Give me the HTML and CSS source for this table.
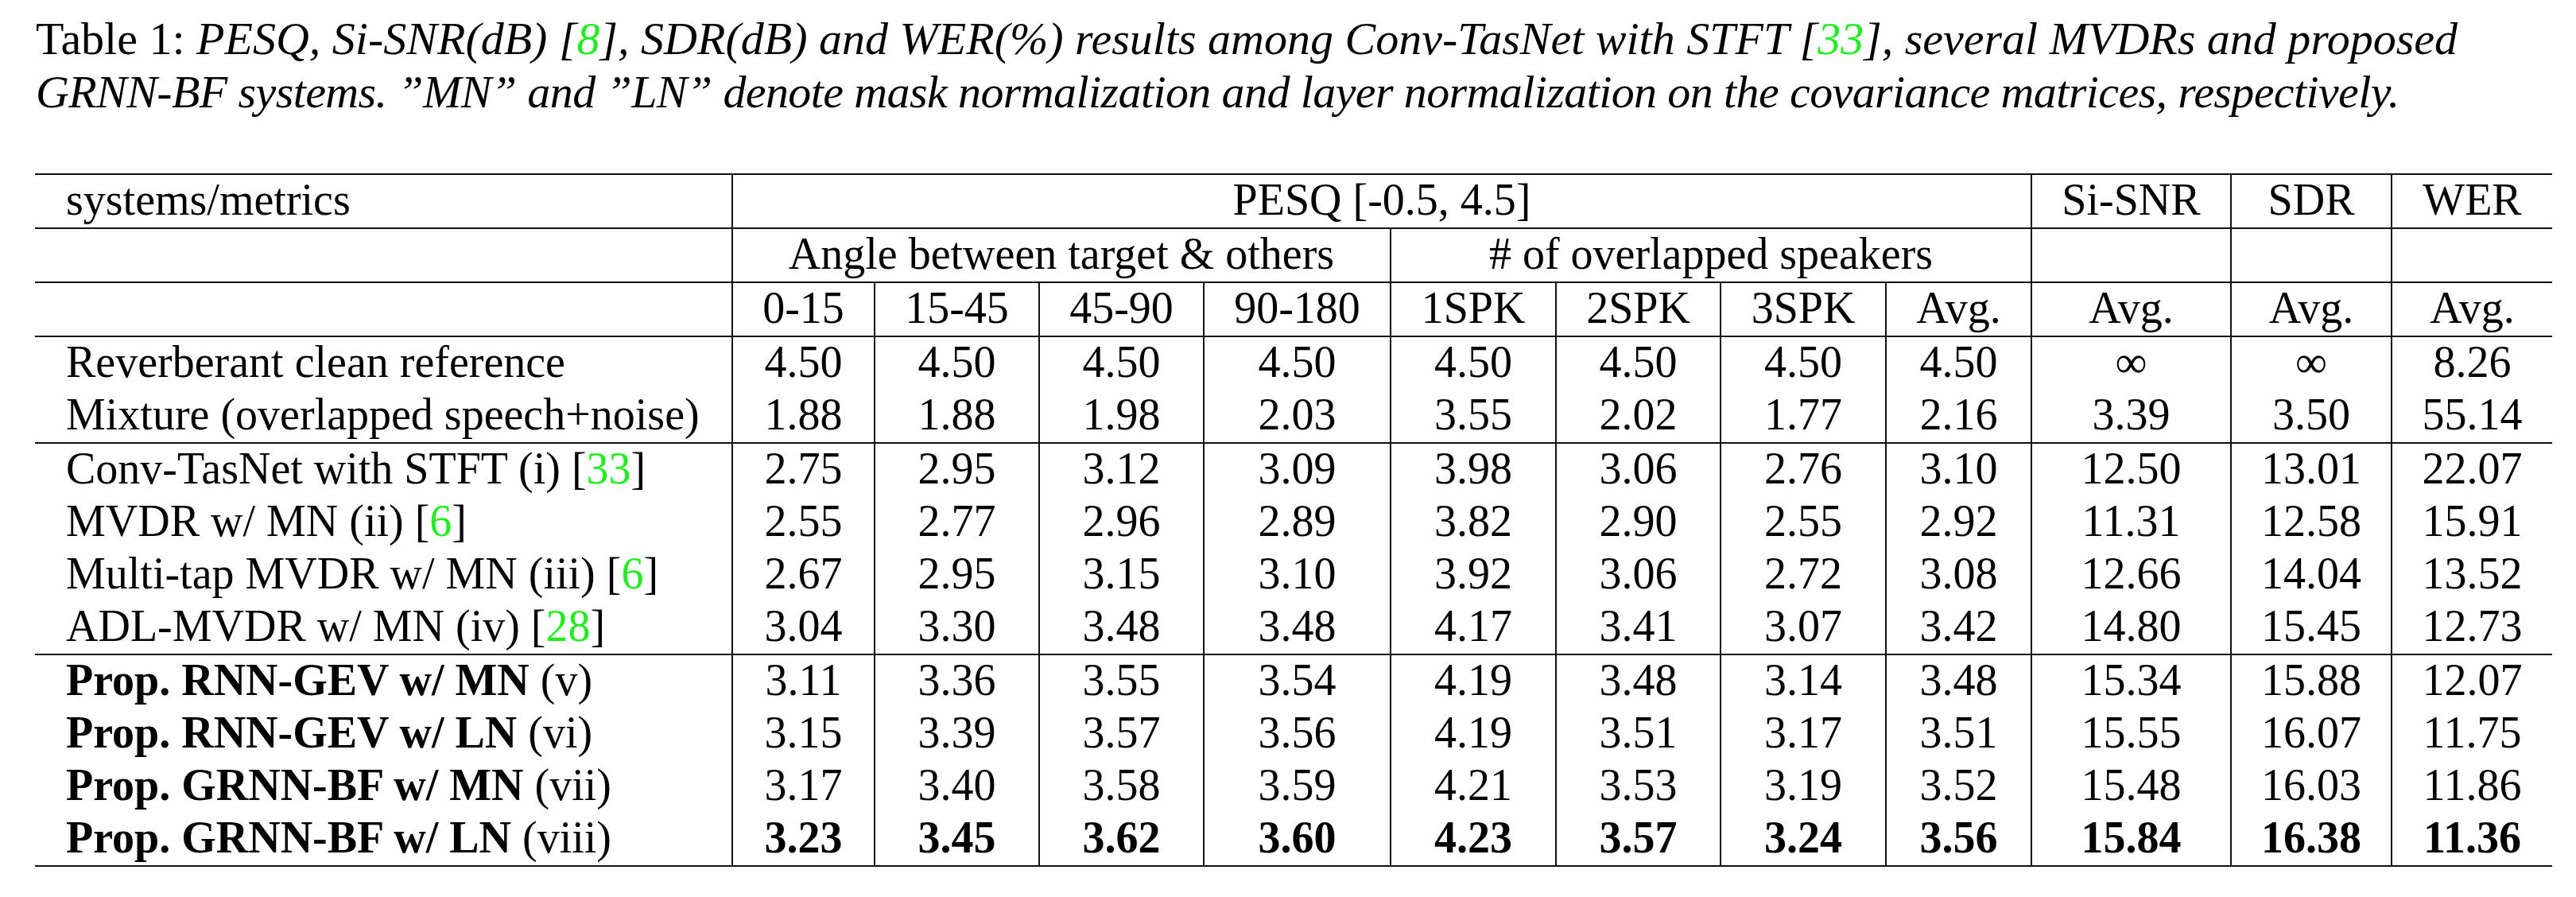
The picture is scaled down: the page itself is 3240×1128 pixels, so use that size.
FILE: index.html
```html
<!DOCTYPE html>
<html lang="en">
<head>
    <meta charset="UTF-8">
    <title>Table 1</title>
    <link rel="stylesheet" href="styles.css">
</head>
<body>

    <!-- Légende du tableau -->
    <p class="caption">Table 1: <em>PESQ, Si-SNR(dB) [<span class="ref">8</span>], SDR(dB) and WER(%) results among Conv-TasNet with STFT [<span class="ref">33</span>], several MVDRs and proposed<br><span class="tight">GRNN-BF systems. ”MN” and ”LN” denote mask normalization and layer normalization on the covariance matrices, respectively.</span></em></p>

    <table class="results">
        <colgroup>
            <col class="c-sys">
            <col class="c-179">
            <col class="c-207">
            <col class="c-207">
            <col class="c-235">
            <col class="c-208">
            <col class="c-207">
            <col class="c-208">
            <col class="c-183">
            <col class="c-251">
            <col class="c-202">
            <col class="c-202">
        </colgroup>
        <tr class="head rule">
            <td class="sys">systems/metrics</td>
            <td colspan="8">PESQ [-0.5, 4.5]</td>
            <td>Si-SNR</td>
            <td>SDR</td>
            <td>WER</td>
        </tr>
        <tr class="head rule">
            <td class="sys"></td>
            <td colspan="4">Angle between target &amp; others</td>
            <td colspan="4"># of overlapped speakers</td>
            <td></td>
            <td></td>
            <td></td>
        </tr>
        <tr class="head rule">
            <td class="sys"></td>
            <td>0-15</td><td>15-45</td><td>45-90</td><td>90-180</td>
            <td>1SPK</td><td>2SPK</td><td>3SPK</td><td>Avg.</td>
            <td>Avg.</td><td>Avg.</td><td>Avg.</td>
        </tr>
        <tr>
            <td class="sys">Reverberant clean reference</td>
            <td>4.50</td><td>4.50</td><td>4.50</td><td>4.50</td>
            <td>4.50</td><td>4.50</td><td>4.50</td><td>4.50</td>
            <td>∞</td><td>∞</td><td>8.26</td>
        </tr>
        <tr class="rule">
            <td class="sys">Mixture (overlapped speech+noise)</td>
            <td>1.88</td><td>1.88</td><td>1.98</td><td>2.03</td>
            <td>3.55</td><td>2.02</td><td>1.77</td><td>2.16</td>
            <td>3.39</td><td>3.50</td><td>55.14</td>
        </tr>
        <tr>
            <td class="sys">Conv-TasNet with STFT (i) [<span class="ref">33</span>]</td>
            <td>2.75</td><td>2.95</td><td>3.12</td><td>3.09</td>
            <td>3.98</td><td>3.06</td><td>2.76</td><td>3.10</td>
            <td>12.50</td><td>13.01</td><td>22.07</td>
        </tr>
        <tr>
            <td class="sys">MVDR w/ MN (ii) [<span class="ref">6</span>]</td>
            <td>2.55</td><td>2.77</td><td>2.96</td><td>2.89</td>
            <td>3.82</td><td>2.90</td><td>2.55</td><td>2.92</td>
            <td>11.31</td><td>12.58</td><td>15.91</td>
        </tr>
        <tr>
            <td class="sys">Multi-tap MVDR w/ MN (iii) [<span class="ref">6</span>]</td>
            <td>2.67</td><td>2.95</td><td>3.15</td><td>3.10</td>
            <td>3.92</td><td>3.06</td><td>2.72</td><td>3.08</td>
            <td>12.66</td><td>14.04</td><td>13.52</td>
        </tr>
        <tr class="rule">
            <td class="sys">ADL-MVDR w/ MN (iv) [<span class="ref">28</span>]</td>
            <td>3.04</td><td>3.30</td><td>3.48</td><td>3.48</td>
            <td>4.17</td><td>3.41</td><td>3.07</td><td>3.42</td>
            <td>14.80</td><td>15.45</td><td>12.73</td>
        </tr>
        <tr>
            <td class="sys"><b>Prop. RNN-GEV w/ MN</b> (v)</td>
            <td>3.11</td><td>3.36</td><td>3.55</td><td>3.54</td>
            <td>4.19</td><td>3.48</td><td>3.14</td><td>3.48</td>
            <td>15.34</td><td>15.88</td><td>12.07</td>
        </tr>
        <tr>
            <td class="sys"><b>Prop. RNN-GEV w/ LN</b> (vi)</td>
            <td>3.15</td><td>3.39</td><td>3.57</td><td>3.56</td>
            <td>4.19</td><td>3.51</td><td>3.17</td><td>3.51</td>
            <td>15.55</td><td>16.07</td><td>11.75</td>
        </tr>
        <tr>
            <td class="sys"><b>Prop. GRNN-BF w/ MN</b> (vii)</td>
            <td>3.17</td><td>3.40</td><td>3.58</td><td>3.59</td>
            <td>4.21</td><td>3.53</td><td>3.19</td><td>3.52</td>
            <td>15.48</td><td>16.03</td><td>11.86</td>
        </tr>
        <tr class="rule best">
            <td class="sys"><b>Prop. GRNN-BF w/ LN</b> (viii)</td>
            <td>3.23</td><td>3.45</td><td>3.62</td><td>3.60</td>
            <td>4.23</td><td>3.57</td><td>3.24</td><td>3.56</td>
            <td>15.84</td><td>16.38</td><td>11.36</td>
        </tr>
    </table>

</body>
</html>
```

FILE: styles.css
```css
body {
    font-family: "Liberation Serif", "Times New Roman", serif;
    background-color: #fff;
    color: #000;
    margin: 0;
    padding: 0 30px 0 44px;
}

.caption {
    font-size: 58px;
    line-height: 67px;
    margin: 15px 0 0 1px;
    white-space: nowrap;
}

.caption em {
    font-style: italic;
}

/* la deuxième ligne est un peu plus serrée dans l'original */
.caption .tight {
    letter-spacing: -0.6px;
}

.ref {
    color: #22ec22;
}

.results {
    margin-top: 69px;
    border-collapse: collapse;
    table-layout: fixed;
    width: 3166px;
    font-size: 56px;
    border-top: 2px solid #111;
}

.c-sys { width: 877px; }
.c-179 { width: 179px; }
.c-183 { width: 183px; }
.c-202 { width: 202px; }
.c-207 { width: 207px; }
.c-208 { width: 208px; }
.c-235 { width: 235px; }
.c-251 { width: 251px; }

.results td {
    padding: 0 0 4px 0;
    text-align: center;
    white-space: nowrap;
    line-height: 62px;
    height: 62px;
}

.results td + td {
    border-left: 2px solid #111;
}

.results tr.rule td {
    border-bottom: 2px solid #111;
}

.results td.sys {
    text-align: left;
    padding-left: 39px;
}

.best td {
    font-weight: bold;
}

.best td.sys {
    font-weight: normal;
}
```
